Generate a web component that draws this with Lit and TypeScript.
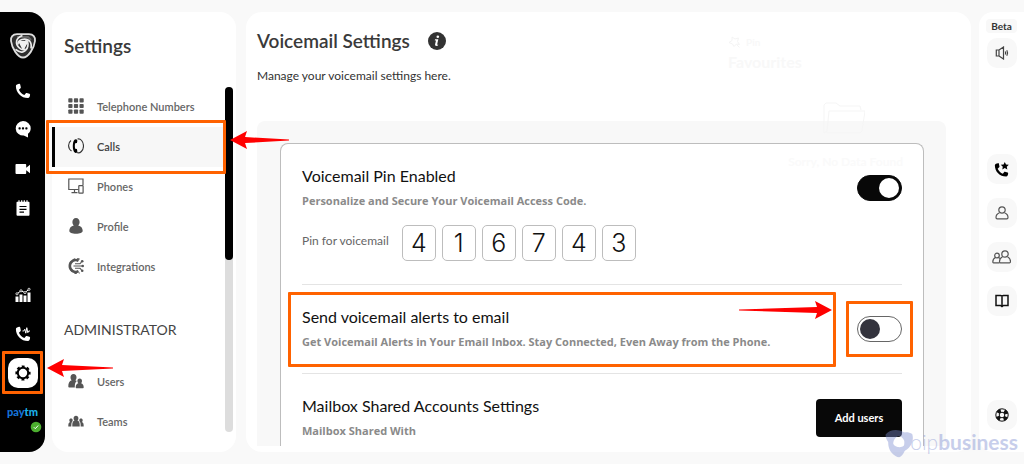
import { LitElement, html, css, svg, nothing, TemplateResult } from "lit";
import { customElement, property } from "lit/decorators.js";
import { classMap } from "lit/directives/class-map.js";

const icon = (body: TemplateResult, w = 16, h = 16, box = `0 0 ${w} ${h}`) =>
  html`<svg width=${w} height=${h} viewBox=${box} fill="currentColor" aria-hidden="true">${body}</svg>`;

const PHONE = "M4.2 .8C3 1 .9 1.6.9 3c0 6.800 5.300 12.100 12 12.100 1.500 0 2.100-2 2.200-3.300 0-.5-.2-.8-.6-1l-2.800-.7c-.4-.1-.8 0-1 .3l-1.300 1.700C7 11 5 9 3.900 6.700L5.500 5.300c.3-.3.4-.6.3-1L5.200 1.500c-.1-.5-.5-.8-1-.7Z";

const BLADE = "M-12.500-7C-7-13.500 6-12.500 9.500-2.500 5.500-6.300.5-7-3.500-3.500-5.300-1.500-5.800 1.500-5 4.500-9.500 2-12.800-2.500-12.500-7Z";
const TURNS = [0, 120, 240];

const ICONS = {
  logo: icon(svg`
    <path d="M8 1.200h12c4.300 0 6.500 3 6 6.800-.9 7-6.500 16.500-12 16.500S2.900 15 2 8c-.5-3.800 1.700-6.800 6-6.800Z" fill="#2f2f2f" stroke="#dedede" stroke-width="1.800"/>
    <path d="M8 4h11l3 3" fill="none" stroke="#666" stroke-width="2"/>
    <g transform="translate(14 11.500)">
      <path d="M-3.800-2.800 4.600-3 .2 4.800Z" fill="#f2f2f2" stroke="#f2f2f2" stroke-width="1.500" stroke-linejoin="round"/>
      ${TURNS.map(t => svg`<path transform="rotate(${t})" d="M-5 0C-5.500-4.500 2-7.500 6.500-3.500 8.500-1.500 8.500 1 8 4" fill="none" stroke="#ececec" stroke-width="1.700"/>`)}
    </g>`, 28, 26),
  phone: icon(svg`<path d=${PHONE}/>`),
  chat: icon(svg`<path d="M8 0a7.700 7.300 0 0 1 7.700 7.300c0 2.300-1 4.200-2.700 5.500V16.500l-4.200-1.900A7.700 7.300 0 1 1 8 0Z"/><g fill="#000"><rect x="3.500" y="6.300" width="2.200" height="2.200" rx=".7"/><rect x="6.900" y="6.300" width="2.200" height="2.200" rx=".7"/><rect x="10.300" y="6.300" width="2.200" height="2.200" rx=".7"/></g>`, 16, 17),
  video: icon(svg`<path d="M1.500 3h8.700c.6 0 1 .4 1 1v2.700L15 3.700v8.600l-3.800-3V12c0 .6-.4 1-1 1H1.500a1 1 0 0 1-1-1V4c0-.6.4-1 1-1Z"/>`),
  notes: icon(svg`<path d="M2.500 1.800h11c.6 0 1 .4 1 1v12c0 .6-.4 1-1 1h-11a1 1 0 0 1-1-1v-12c0-.6.400-1 1-1Z"/><path d="M4 .3v3M6.700.3v3M9.300.3v3M12 .3v3" stroke="#fff" stroke-width="1.200"/><path d="M4.500 6.500h7M4.500 9.300h7M4.500 12.100h4.500" stroke="#000" stroke-width="1.200"/>`),
  chart: icon(svg`<path d="M.5 9.500h3V15h-3ZM4.500 7.500h3V15h-3ZM8.500 8.500h3V15h-3ZM12.500 5.500h3V15h-3Z"/><path d="m2 6.800 4-3 4 1.800 4-3.300" fill="none" stroke="currentColor"/><g fill="#000" stroke="currentColor" stroke-width=".8"><circle cx="2" cy="6.800" r="1.100"/><circle cx="6" cy="3.800" r="1.100"/><circle cx="10" cy="5.600" r="1.100"/><circle cx="14" cy="2.300" r="1.100"/></g>`),
  phoneWave: icon(svg`<path d=${PHONE}/><path d="M7.500 5h1.300l1-1.800 1 4 1-5.500 1 5 .8-1.700h1.400" fill="none" stroke="currentColor"/>`),
  gear: icon(svg`<g fill="none" stroke="#000"><circle cx="8" cy="8" r="5.200" stroke-width="2"/><circle cx="8" cy="8" r="6.600" stroke-width="2" stroke-dasharray="2.900 2.284" stroke-dashoffset="1.450"/></g>`),
  grid: icon(svg`${[0.3, 5.9, 11.5].map(y => [0.3, 5.9, 11.5].map(x => svg`<rect x=${x} y=${y} width="4.200" height="4.200" rx=".8"/>`))}`),
  calls: icon(svg`<path d="M7.800 1.200c-2 0-3 3-3 6.800s1 6.900 3 6.900c1.100 0 1.700-.7 1.500-2l-.4-1.900-1.700-.3c-.5-1.700-.5-3.700 0-5.400l1.700-.3.400-1.800c.2-1.300-.4-2-1.500-2Z" fill="#000"/><path d="M3.500 13C-.3 10.500-.3 5 3 2.500M9.500 1C12.500.2 15.500 3.500 15.500 8s-3.500 8-6.700 6.500" fill="none" stroke="#333" stroke-width="1.100"/>`),
  devices: icon(svg`<g fill="none" stroke="currentColor" stroke-width="1.200"><path d="M10.500 11.500H.8V1h14.200v6M3.500 14.600h6M6.500 11.500v3"/><rect x="10.800" y="7.600" width="4.300" height="7.600" rx=".5"/></g>`),
  user: icon(svg`<path d="M8 0c2.200 0 3.600 1.700 3.600 4 0 1.300-.5 2.600-1.400 3.400 2.800.6 4.500 2.600 4.500 5.300 0 1.900-2.700 3-6.700 3s-6.700-1.100-6.700-3c0-2.700 1.700-4.700 4.500-5.300C4.900 6.600 4.400 5.300 4.400 4 4.400 1.700 5.800 0 8 0Z"/>`),
  integrations: icon(svg`<g fill="none" stroke="currentColor"><path d="M10.500 2.800A5.900 5.900 0 1 0 10.500 13.200" stroke-width="2.600"/><path d="M11.500 1.200A7.200 7.200 0 1 0 11.500 14.800" stroke-width="1.600" stroke-dasharray="2.400 2"/><path d="M5.500 8h9M7 5.700h5l1.500-1.500M7 10.300h5l1.500 1.500" stroke-width="1.100"/></g><circle cx="14.200" cy="3.300" r="1.300"/><circle cx="14.700" cy="8" r="1.300"/><circle cx="14.200" cy="12.700" r="1.300"/>`),
  users: icon(svg`<path d="M5.500 1c1.900 0 3 1.400 3 3.300 0 1.200-.4 2.300-1.200 3l1.500.6c-1.300 1-2 2.700-2 5.600v.9H1.200C.6 14.400.3 14 .3 13.500.3 10.200 1.200 8 3.700 7.300c-.8-.7-1.200-1.800-1.200-3C2.500 2.400 3.600 1 5.500 1Z"/><path d="M11.700 5.600c1.500 0 2.300 1 2.300 2.400 0 .9-.3 1.700-.9 2.200 1.700.5 2.600 1.900 2.600 4 0 .6-.4 1-1 1H8.700c-.6 0-1-.4-1-1 0-2.100.9-3.500 2.600-4-.6-.5-.9-1.300-.9-2.200 0-1.400.8-2.400 2.300-2.400Z"/>`),
  teams: icon(svg`<path d="M8 2.700c1.500 0 2.400 1 2.400 2.500 0 1-.4 1.900-1 2.400 1.700.5 2.300 2 2.300 4.200v1.700H4.300v-1.700c0-2.200.6-3.700 2.300-4.200-.6-.5-1-1.400-1-2.400C5.600 3.700 6.500 2.700 8 2.700Z"/><path d="M3 5.600c1 0 1.700.7 1.700 1.700 0 .7-.3 1.300-.7 1.700-.5.700-.7 1.800-.7 4.500H.3c0-2.500.2-3.800 1.700-4.500-.4-.4-.700-1-.700-1.700 0-1 .7-1.700 1.700-1.700ZM13 5.600c-1 0-1.700.7-1.700 1.700 0 .7.3 1.300.7 1.700.5.7.7 1.800.7 4.500h3c0-2.500-.2-3.800-1.700-4.500.4-.4.700-1 .7-1.700 0-1-.7-1.700-1.700-1.700Z"/>`),
  info: icon(svg`<circle cx="9" cy="9" r="9" fill="#333"/><g fill="#fff"><circle cx="9.800" cy="4.800" r="1.300"/><path d="M7 7.300h3.300l-1.100 5c-.1.500.2.600 1 .2l-.2.900c-1.600.9-3.300.6-2.900-1.100l.9-3.900H6.800Z"/></g>`, 18, 18),
  speaker: icon(svg`<g fill="none" stroke="#444" stroke-width="1.200"><path d="M.8 5H3.500v6H.8ZM3.500 5 8 2v12l-4.500-3"/><path d="M9.800 6.500c.5 1 .5 2 0 3M11.300 5.300c1 1.800 1 3.600 0 5.400"/></g>`, 14, 14, "0 1 13 14"),
  phoneStar: icon(svg`<path d=${PHONE} /><path d="m11.500-.4 1.300 2.600 3 .4-2.200 2 .6 3-2.700-1.500-2.700 1.500.6-3-2.200-2 3-.4Z"/>`, 15, 15, "0 -.4 16 16"),
  person: icon(svg`<g fill="none" stroke="#555" stroke-width="1.200"><circle cx="7" cy="4" r="3.200"/><path d="M4.500 6.800C2 7.800 1 9.500 1 11.500c0 1 .5 1.300 1.200 1.300h9.600c.7 0 1.200-.3 1.200-1.300 0-2-1-3.700-3.500-4.700"/></g>`, 14, 14),
  people: icon(svg`<g fill="none" stroke="#555" stroke-width="1.200"><circle cx="13" cy="4" r="3.200"/><path d="M10.500 6.800C8.500 7.800 7.500 9.500 7.500 11.500c0 1 .2 1.300.9 1.300h9.200c.7 0 .9-.3.9-1.300 0-2-1-3.700-3-4.700"/><circle cx="5" cy="5.500" r="2.300"/><path d="M3.500 7.500C1.800 8.300.8 9.500.8 12c0 .600.300.8.700.8h6M6.500 7.500l1.500 1"/></g>`, 19, 14),
  book: icon(svg`<path d="M1 1.500h4.500L7 2l1.500-.5H13v10H8.500l-1.500 1-1.500-1H1ZM7 2v10.500" fill="none" stroke="#111" stroke-width="1.500"/>`, 14, 14),
  help: icon(svg`<g fill="none" stroke="#111"><circle cx="7" cy="7" r="6.200"/><circle cx="7" cy="7" r="2.800"/><circle cx="7" cy="7" r="4.600" stroke-width="3.800" stroke-dasharray="3.600 3.626" stroke-dashoffset="-1.810"/></g>`, 14, 14),
  tick: icon(svg`<circle cx="6" cy="6" r="5.300" fill="#4caf2f"/><path d="m3.800 6.200 1.500 1.500 2.900-3.200" fill="none" stroke="#fff"/>`, 12, 12),
};

type IconName = keyof typeof ICONS;

const arrow = (length: number, cls: string) => html`
  <svg class="arrow ${cls}" width=${length} height="18" viewBox="0 0 ${length} 18" aria-hidden="true">
    <path d="M0 9 17 0 15 6 ${length} 8.500V9.500L15 12 17 18Z" fill="#f00"/>
  </svg>`;

const marks = css`
  .arrow { position: absolute; z-index: 5; }
  .marked { position: relative; }
  .marked::after {
    content: ""; position: absolute; z-index: 4; inset: var(--mark);
    border: 3px solid #ff6200; border-radius: 1px; pointer-events: none;
  }
`;

@customElement("nav-rail")
class NavRail extends LitElement {
  static styles = [marks, css`
    :host { display: flex; flex-direction: column; align-items: center; box-sizing: border-box;
      padding: 21px 0; background: #000; color: #fff; border-radius: 0 16px 16px 0; }
    nav { display: flex; flex-direction: column; width: 100%; }
    .top { margin-top: 12px; }
    .bottom { margin-top: auto; }
    a, .account { display: flex; align-items: center; justify-content: center; height: 39px; color: inherit; text-decoration: none; }
    svg { display: block; }
    .tile { display: grid; place-items: center; width: 30px; height: 30px; border-radius: 10px; background: #fff; }
    .marked { --mark: -2px 2px -2px 2px; }
    .out { left: 47px; top: 6px; }
    .account { position: relative; font: 900 11px/12px "Lato", sans-serif; color: #1673d9; }
    .account b { color: #1bb0e8; font-weight: 900; }
    .badge { position: absolute; right: 3px; bottom: -2px; }
  `];

  private link(name: IconName, label: string) {
    return html`<a href="#${name}" aria-label=${label}>${ICONS[name]}</a>`;
  }

  render() {
    return html`
      ${ICONS.logo}
      <nav class="top" aria-label="Main">
        ${this.link("phone", "Phone")}${this.link("chat", "Chat")}
        ${this.link("video", "Video")}${this.link("notes", "Notes")}
      </nav>
      <nav class="bottom" aria-label="Tools">
        ${this.link("chart", "Reports")}${this.link("phoneWave", "Call activity")}
        <a class="marked" href="#settings" aria-label="Settings" aria-current="page">
          <span class="tile">${ICONS.gear}</span>${arrow(66, "out")}
        </a>
        <div class="account"><span>pay<b>tm</b></span><span class="badge">${ICONS.tick}</span></div>
      </nav>`;
  }
}

@customElement("settings-menu")
class SettingsMenu extends LitElement {
  static styles = [marks, css`
    :host { display: flex; flex-direction: column; box-sizing: border-box; padding: 20px 3px 20px 0;
      background: #fff; border-radius: 16px; font-family: "Lato", sans-serif; }
    h2 { margin: 0 0 27px 12px; font-size: 19px; line-height: 28px; font-weight: 600; color: #3a3a3a; }
    h3 { margin: 32px 0 22px 12px; font-size: 14px; line-height: 21px; font-weight: 400; color: #444; }
    .scroller { display: flex; flex: 1; min-height: 0; }
    nav { flex: 1; }
    a { display: flex; align-items: center; gap: 13px; box-sizing: border-box; height: 40px; padding: 0 0 2px 16px;
      color: #666; text-decoration: none; font-size: 11px; font-weight: 600; }
    svg { display: block; color: #555; }
    .active { padding-left: 13px; border-left: 3px solid #000; background: #f7f7f7; color: #444; }
    .marked { --mark: -7px -1px -7px -9px; }
    .out { left: 175px; top: 4px; }
    .track { width: 8px; border-radius: 4px; background: #ddd; }
    .thumb { height: 50%; border-radius: 4px; background: #000; }
  `];

  private item(name: IconName, label: string, active = false) {
    return html`
      <a href="#${label}" class=${classMap({ active, marked: active })} aria-current=${active ? "page" : nothing}>
        ${ICONS[name]}<span>${label}</span>${active ? arrow(59, "out") : nothing}
      </a>`;
  }

  render() {
    return html`
      <h2>Settings</h2>
      <div class="scroller">
        <nav aria-label="Settings">
          ${this.item("grid", "Telephone Numbers")}${this.item("calls", "Calls", true)}
          ${this.item("devices", "Phones")}${this.item("user", "Profile")}
          ${this.item("integrations", "Integrations")}
          <h3>ADMINISTRATOR</h3>
          ${this.item("users", "Users")}${this.item("teams", "Teams")}
        </nav>
        <div class="track"><div class="thumb"></div></div>
      </div>`;
  }
}

@customElement("setting-row")
class SettingRow extends LitElement {
  @property() heading = "";
  @property() detail = "";
  @property({ type: Boolean }) highlighted = false;

  static styles = [marks, css`
    :host { display: block; padding: 22px 0 23px; border-bottom: 1px solid #e4e4e4; }
    :host(:last-of-type) { border-bottom: 0; padding-bottom: 7px; }
    .line { display: flex; align-items: center; gap: 36px; }
    .text { flex: 1; }
    h4 { margin: 0 0 7px; font-size: 16px; line-height: 20px; font-weight: 400; color: #111; }
    p { margin: 0; font: 700 11px/16px "Open Sans", sans-serif; color: #8a8a8a; }
    .marked { --mark: -15px -15px -17px -14px; }
    .in { right: -11px; top: -6px; transform: scaleX(-1); }
  `];

  render() {
    return html`
      <div class="line">
        <div class=${classMap({ text: true, marked: this.highlighted })}>
          <h4>${this.heading}</h4>
          <p>${this.detail}</p>
          ${this.highlighted ? arrow(93, "in") : nothing}
        </div>
        <slot name="control"></slot>
      </div>
      <slot></slot>`;
  }
}

@customElement("voicemail-settings")
class VoicemailSettings extends LitElement {
  static styles = [marks, css`
    :host { display: flex; flex-direction: column; position: relative; box-sizing: border-box; min-width: 0;
      padding: 15px 25px 6px 11px; background: #fff; border-radius: 16px; font-family: "Lato", sans-serif; color: #333; }
    header { display: flex; align-items: center; gap: 18px; }
    h1 { margin: 0; font-size: 19px; line-height: 28px; font-weight: 600; color: #3a3a3a; }
    svg { display: block; }
    .intro { margin: 12px 0 36px; font-size: 12px; line-height: 18px; }
    .region { flex: 1; min-height: 0; overflow: hidden; padding: 22px 22px 0 23px; background: #f8f8f8; border-radius: 8px 8px 0 0; }
    .card { padding: 0 21px; background: #fff; border: 1px solid #bdbdbd; border-bottom: 0; border-radius: 8px 8px 0 0; }
    .pin { display: flex; align-items: center; gap: 13px; margin-top: 16px; font-size: 12px; color: #666; }
    .pin label { padding-bottom: 6px; }
    .boxes { display: flex; gap: 6px; }
    .boxes input { box-sizing: border-box; width: 34px; height: 36px; padding: 0; border: 1px solid #bdbdbd; border-radius: 5px;
      background: #fff; color: #111; text-align: center; font: 300 25px/34px "Inter", sans-serif; }
    .switch { display: block; }
    .switch input { appearance: none; display: flex; align-items: center; box-sizing: border-box; width: 45px; height: 26px;
      margin: 0; padding: 0 2px; border: 1px solid #666; border-radius: 13px; background: #fff; }
    .switch input::before { content: ""; width: 20px; height: 20px; border-radius: 50%; background: #33333d; }
    .switch input:checked { justify-content: flex-end; background: #080808; border-color: #080808; }
    .switch input:checked::before { background: #fff; }
    .marked { --mark: -15px -11px -15px -11px; }
    button { width: 86px; height: 38px; border: 0; border-radius: 4px; background: #080808; color: #fff;
      font: 700 11px/16px "Lato", sans-serif; }
    .ghost { position: absolute; color: #f8f8f8; font-weight: 700; pointer-events: none; }
    .favourites { top: 20px; right: 169px; width: 74px; font-size: 16px; line-height: 20px; }
    .favourites div { display: flex; align-items: center; gap: 6px; font-size: 10px; }
    .folder { top: 90px; right: 106px; color: #f5f5f5; }
    .empty { top: 142px; right: 68px; font-size: 12px; line-height: 16px; color: #fafafa; }
  `];

  private toggle(label: string, checked: boolean, marked = false) {
    return html`
      <label slot="control" class=${classMap({ switch: true, marked })}>
        <input type="checkbox" role="switch" aria-label=${label} .checked=${checked}>
      </label>`;
  }

  render() {
    return html`
      <header><h1>Voicemail Settings</h1>${ICONS.info}</header>
      <p class="intro">Manage your voicemail settings here.</p>
      <div class="region">
        <div class="card">
          <setting-row heading="Voicemail Pin Enabled" detail="Personalize and Secure Your Voicemail Access Code.">
            ${this.toggle("Voicemail Pin Enabled", true)}
            <div class="pin">
              <label for="pin0">Pin for voicemail</label>
              <div class="boxes">
                ${[..."416743"].map((d, i) => html`<input id="pin${i}" maxlength="1" inputmode="numeric" aria-label="Pin digit ${i + 1}" .value=${d}>`)}
              </div>
            </div>
          </setting-row>
          <setting-row highlighted heading="Send voicemail alerts to email"
            detail="Get Voicemail Alerts in Your Email Inbox. Stay Connected, Even Away from the Phone.">
            ${this.toggle("Send voicemail alerts to email", false, true)}
          </setting-row>
          <setting-row heading="Mailbox Shared Accounts Settings" detail="Mailbox Shared With">
            <button slot="control" type="button">Add users</button>
          </setting-row>
        </div>
      </div>
      <div class="ghost favourites" aria-hidden="true">
        <div>${icon(svg`<path d="m4 1 3 2 3.500-1-1 3.500 2 3-3-.5L6 10.500 4.500 8 1 6.500 4 4.500ZM8.500 8.500l3 3" fill="none" stroke="#f4f4f4"/>`, 12, 12)}Pin</div>
        Favourites
      </div>
      <div class="ghost folder">${icon(svg`<path d="M4 29 1 31V3l2-2h10l4 3h20l1 4M4 29 6 9h36l-3 20-2 2H4Z" fill="none" stroke="currentColor"/>`, 42, 32)}</div>
      <div class="ghost empty" aria-hidden="true">Sorry, No Data Found</div>`;
  }
}

@customElement("quick-bar")
class QuickBar extends LitElement {
  static styles = css`
    :host { display: flex; flex-direction: column; align-items: center; box-sizing: border-box;
      padding: 7px 0 22px; background: #fff; border-radius: 14px 0 0 14px; }
    .beta { margin-bottom: 5px; padding: 0 5px; border-radius: 4px; background: #f8f8f8; color: #333;
      font: 700 10px/14px "Lato", sans-serif; }
    a { display: grid; place-items: center; width: 30px; height: 30px; border-radius: 10px; background: #f8f8f8; color: #000; }
    nav { display: flex; flex-direction: column; gap: 14px; margin-top: 86px; }
    .help { margin-top: auto; }
  `;

  private tile(name: IconName, label: string, cls = "") {
    return html`<a class=${cls} href="#${name}" aria-label=${label}>${ICONS[name]}</a>`;
  }

  render() {
    return html`
      <span class="beta">Beta</span>
      ${this.tile("speaker", "Sound")}
      <nav aria-label="Shortcuts">
        ${this.tile("phoneStar", "Favourite calls")}${this.tile("person", "Contact")}
        ${this.tile("people", "Contacts")}${this.tile("book", "Directory")}
      </nav>
      ${this.tile("help", "Help", "help")}`;
  }
}

@customElement("app-root")
class AppRoot extends LitElement {
  static styles = css`
    :host { display: flex; position: relative; box-sizing: border-box; height: 100vh; padding: 12px 0; background: #f9f9f9; }
    nav-rail { flex: 0 0 45px; position: relative; z-index: 2; }
    settings-menu { flex: 0 0 184px; margin: 0 10px 0 7px; position: relative; z-index: 1; }
    voicemail-settings { flex: 1; }
    quick-bar { flex: 0 0 45px; margin-left: 8px; }
    .watermark { position: absolute; right: 6px; bottom: 6px; z-index: 3; display: flex; align-items: flex-end;
      color: #7c8cd0; opacity: .42; font: 700 21px/32px "Lato", sans-serif; pointer-events: none; }
    .watermark svg { margin-right: -4px; }
    .thin { font-weight: 300; }
  `;

  render() {
    return html`
      <nav-rail></nav-rail>
      <settings-menu></settings-menu>
      <voicemail-settings></voicemail-settings>
      <quick-bar></quick-bar>
      <div class="watermark">
        ${icon(svg`${TURNS.map(t => svg`<path transform="rotate(${t})" d=${BLADE}/>`)}`, 30, 30, "-14 -13 28 28")}
        <span><span class="thin">oip</span>business</span>
      </div>`;
  }
}
